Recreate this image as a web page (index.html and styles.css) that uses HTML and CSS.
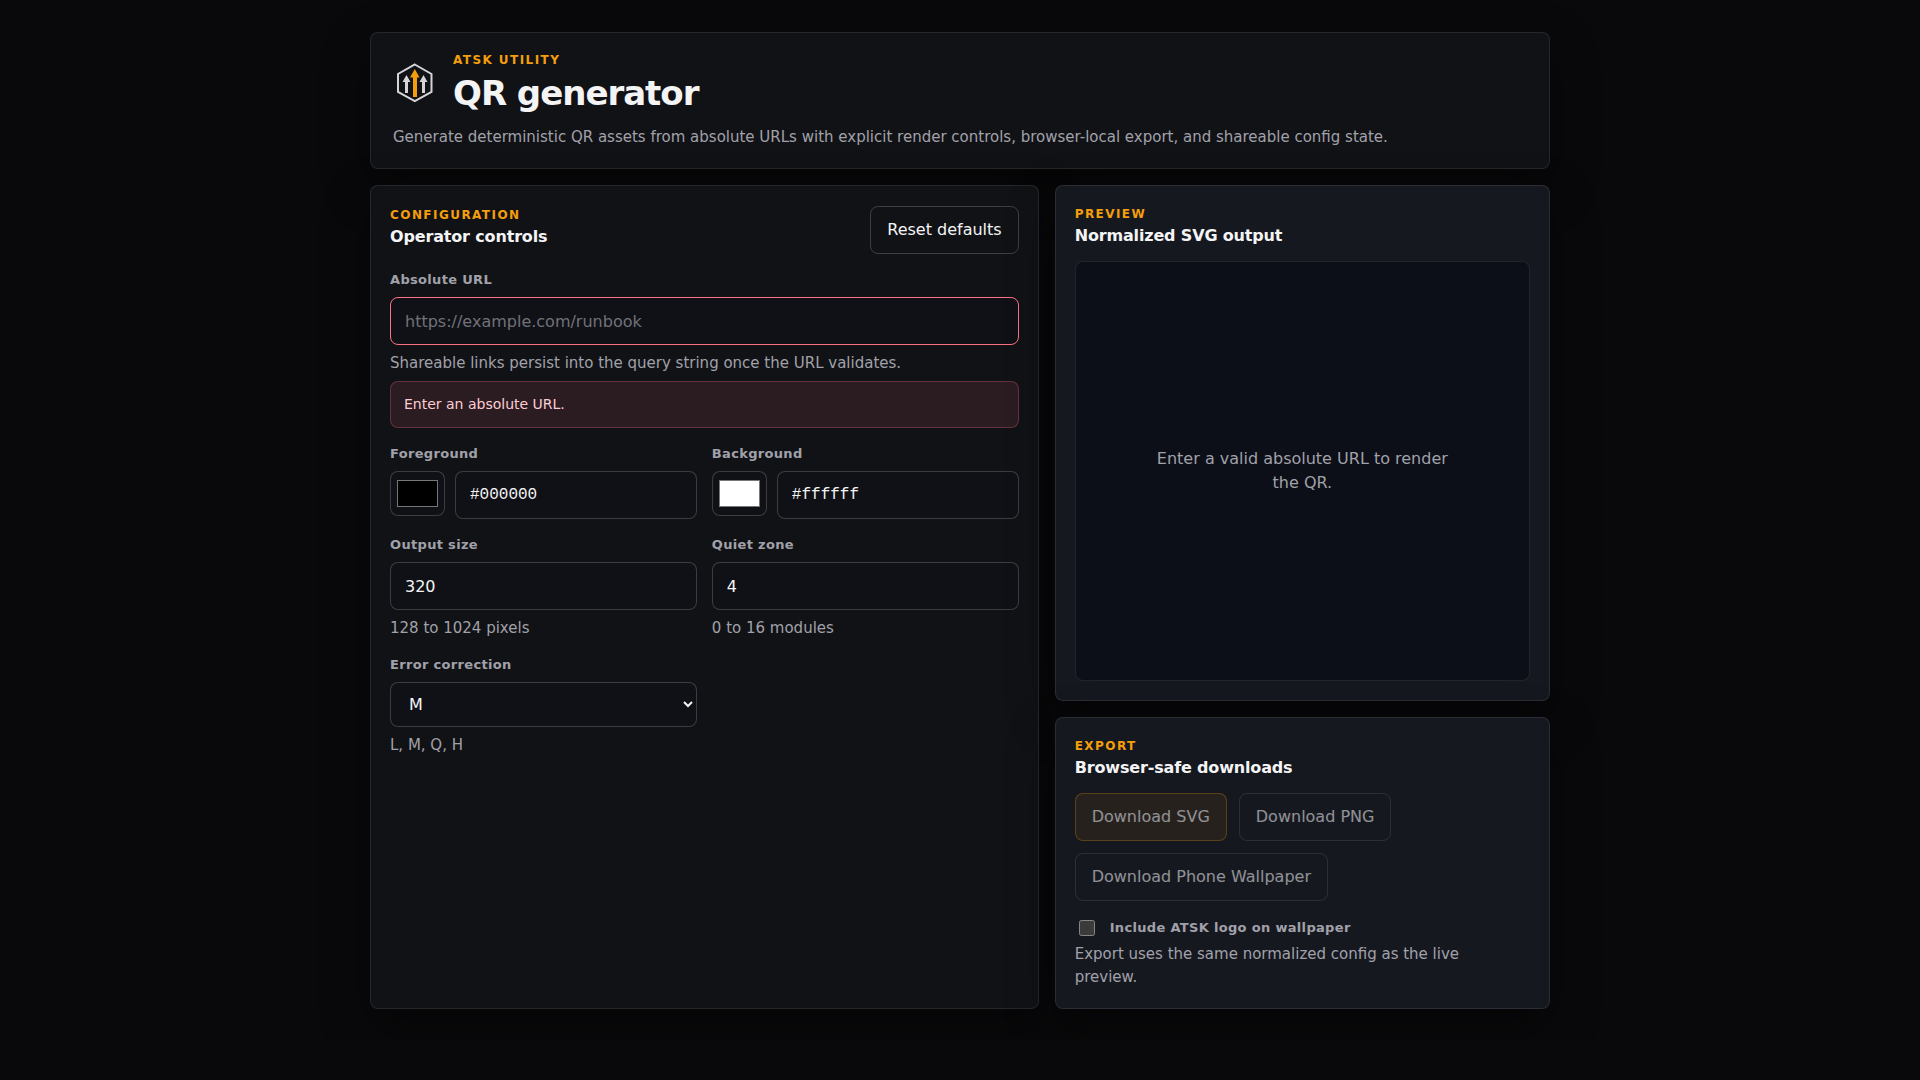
FILE: index.html
```html
<!DOCTYPE html>
<html lang="en">
<head>
<meta charset="utf-8">
<meta name="viewport" content="width=device-width, initial-scale=1">
<title>QR generator</title>
<link rel="stylesheet" href="styles.css">
</head>
<body>
<main class="page">
  <header class="card hero">
    <div class="brand">
      <svg class="logo" viewBox="0 0 44 44" aria-hidden="true">
        <path d="M21.800 3.500L38.500 13V31L21.800 40.200L5 31V13Z" fill="none" stroke="#d4d4d8" stroke-width="2"/>
        <path d="M12 32V21H9.500L13.500 14L17.500 21H15V32Z" fill="#d4d4d8"/>
        <path d="M29 32V21H26.500L30.500 14L34.500 21H32V32Z" fill="#d4d4d8"/>
        <path d="M20 36V16.500H17L21.800 8L26.500 16.500H24V36Z" fill="#f59e0b"/>
      </svg>
      <div class="brand-text">
        <p class="eyebrow">ATSK UTILITY</p>
        <h1 class="title">QR generator</h1>
      </div>
    </div>
    <p class="lede">Generate deterministic QR assets from absolute URLs with explicit render controls, browser-local export, and shareable config state.</p>
  </header>

  <div class="columns">
    <form class="card panel config" novalidate>
      <div class="panel-head">
        <div>
          <p class="eyebrow">CONFIGURATION</p>
          <h2 class="subtitle">Operator controls</h2>
        </div>
        <button class="button" type="button">Reset defaults</button>
      </div>

      <div class="field">
        <label class="label" for="url">Absolute URL</label>
        <input class="control invalid" id="url" type="url" placeholder="https://example.com/runbook" aria-invalid="true" aria-describedby="url-hint url-error">
        <p class="hint" id="url-hint">Shareable links persist into the query string once the URL validates.</p>
        <p class="error" id="url-error">Enter an absolute URL.</p>
      </div>

      <div class="fields">
        <div class="field">
          <label class="label" for="fg">Foreground</label>
          <div class="color-row">
            <input class="swatch" type="color" value="#000000" aria-label="Foreground color picker">
            <input class="control mono" id="fg" type="text" value="#000000">
          </div>
        </div>
        <div class="field">
          <label class="label" for="bg">Background</label>
          <div class="color-row">
            <input class="swatch" type="color" value="#ffffff" aria-label="Background color picker">
            <input class="control mono" id="bg" type="text" value="#ffffff">
          </div>
        </div>
        <div class="field">
          <label class="label" for="size">Output size</label>
          <input class="control" id="size" type="number" min="128" max="1024" value="320">
          <p class="hint">128 to 1024 pixels</p>
        </div>
        <div class="field">
          <label class="label" for="quiet">Quiet zone</label>
          <input class="control" id="quiet" type="number" min="0" max="16" value="4">
          <p class="hint">0 to 16 modules</p>
        </div>
        <div class="field">
          <label class="label" for="ecc">Error correction</label>
          <select class="control select" id="ecc">
            <option>L</option>
            <option selected>M</option>
            <option>Q</option>
            <option>H</option>
          </select>
          <p class="hint">L, M, Q, H</p>
        </div>
      </div>
    </form>

    <div class="side">
      <section class="card panel raised">
        <div>
          <p class="eyebrow">PREVIEW</p>
          <h2 class="subtitle">Normalized SVG output</h2>
        </div>
        <div class="preview"><p class="preview-text">Enter a valid absolute URL to render the QR.</p></div>
      </section>

      <section class="card panel raised">
        <div>
          <p class="eyebrow">EXPORT</p>
          <h2 class="subtitle">Browser-safe downloads</h2>
        </div>
        <div class="actions">
          <button class="button primary" type="button" disabled>Download SVG</button>
          <button class="button" type="button" disabled>Download PNG</button>
          <button class="button" type="button" disabled>Download Phone Wallpaper</button>
        </div>
        <div class="options">
          <label class="label check"><input class="checkbox" type="checkbox">Include ATSK logo on wallpaper</label>
          <p class="hint note">Export uses the same normalized config as the live preview.</p>
        </div>
      </section>
    </div>
  </div>
</main>
</body>
</html>
```
FILE: styles.css
```css
:root {
  color-scheme: dark;
  --text: #f4f4f5;
  --muted: #a1a1aa;
  --accent: #f59e0b;
  --line: rgba(255, 255, 255, 0.09);
  --line-strong: rgba(255, 255, 255, 0.19);
  --danger: #fb7185;
}

* {
  box-sizing: border-box;
}

body {
  margin: 0;
  background: #09090b;
  color: var(--text);
  font: 16px/24px "DejaVu Sans", sans-serif;
}

p,
h1,
h2 {
  margin: 0;
}

.page {
  max-width: 1212px;
  margin: 0 auto;
  padding: 32px 16px;
  display: grid;
  gap: 16px;
}

.card {
  border: 1px solid var(--line);
  border-radius: 8px;
  background: #111216;
  box-shadow: 0 18px 48px rgba(0, 0, 0, 0.4);
}

.hero {
  padding: 18px 22px 19px;
  display: grid;
  gap: 10px;
}

.brand {
  display: flex;
  align-items: center;
  gap: 16px;
}

.brand-text {
  display: grid;
  gap: 2px;
}

.logo {
  width: 44px;
  height: 44px;
  flex: none;
}

.eyebrow {
  color: var(--accent);
  font-size: 12px;
  line-height: 18px;
  font-weight: 700;
  letter-spacing: 0.12em;
}

.title {
  font-size: 34px;
  line-height: 44px;
  font-weight: 700;
  letter-spacing: -0.03em;
}

.lede {
  color: var(--muted);
  font-size: 15px;
}

.columns {
  display: grid;
  grid-template-columns: 1.35fr 1fr;
  gap: 16px;
}

.side {
  display: grid;
  gap: 16px;
  align-content: start;
}

.panel {
  padding: 19px;
}

.config {
  display: flex;
  flex-direction: column;
  gap: 16px;
  padding-top: 20px;
}

.raised {
  background: #161820;
  display: grid;
  gap: 12px;
}

.panel-head {
  display: flex;
  justify-content: space-between;
  align-items: flex-start;
  gap: 16px;
}

.subtitle {
  font-size: 16px;
  line-height: 26px;
  font-weight: 700;
  letter-spacing: -0.01em;
}

.fields {
  display: grid;
  grid-template-columns: 1fr 1fr;
  gap: 16px 15px;
}

.field {
  display: grid;
  gap: 7px;
  align-content: start;
}

.label {
  color: var(--muted);
  font-size: 13px;
  line-height: 20px;
  font-weight: 700;
  letter-spacing: 0.025em;
}

.control {
  width: 100%;
  min-width: 0;
  height: 48px;
  padding: 0 14px;
  border: 1px solid var(--line-strong);
  border-radius: 8px;
  background: #101116;
  color: var(--text);
  font: inherit;
}

.control::placeholder {
  color: #71717a;
}

.control[type="number"] {
  appearance: textfield;
}

.invalid {
  border-color: var(--danger);
}

.mono {
  font-family: "Liberation Mono", monospace;
}

.select {
  height: 45px;
}

.color-row {
  display: flex;
  align-items: flex-start;
  gap: 10px;
}

.swatch {
  flex: none;
  width: 55px;
  height: 45px;
  padding: 4px;
  border: 1px solid var(--line-strong);
  border-radius: 8px;
  background: #101116;
}

.hint {
  color: var(--muted);
  font-size: 15px;
  line-height: 22px;
}

.error {
  padding: 12px 13px;
  border: 1px solid rgba(251, 113, 133, 0.28);
  border-radius: 8px;
  background: rgba(251, 113, 133, 0.11);
  color: #fecdd3;
  font-size: 14px;
  line-height: 21px;
}

.button {
  height: 48px;
  padding: 0 16px;
  border: 1px solid var(--line-strong);
  border-radius: 8px;
  background: transparent;
  color: var(--text);
  font: inherit;
}

.button:disabled {
  opacity: 0.55;
}

.primary {
  border-color: rgba(245, 158, 11, 0.5);
  background: rgba(245, 158, 11, 0.14);
}

.preview {
  height: 420px;
  display: grid;
  place-items: center;
  border: 1px solid var(--line);
  border-radius: 8px;
  background: #0c0f17;
}

.preview-text {
  max-width: 320px;
  color: var(--muted);
  text-align: center;
}

.actions {
  display: flex;
  flex-wrap: wrap;
  gap: 12px;
}

.options {
  display: grid;
  gap: 1px;
}

.check {
  display: flex;
  align-items: center;
  gap: 15px;
  padding: 5px 4px 4px;
}

.checkbox {
  width: 16px;
  height: 16px;
  margin: 0;
}

.note {
  max-width: 440px;
  line-height: 23px;
}
```
